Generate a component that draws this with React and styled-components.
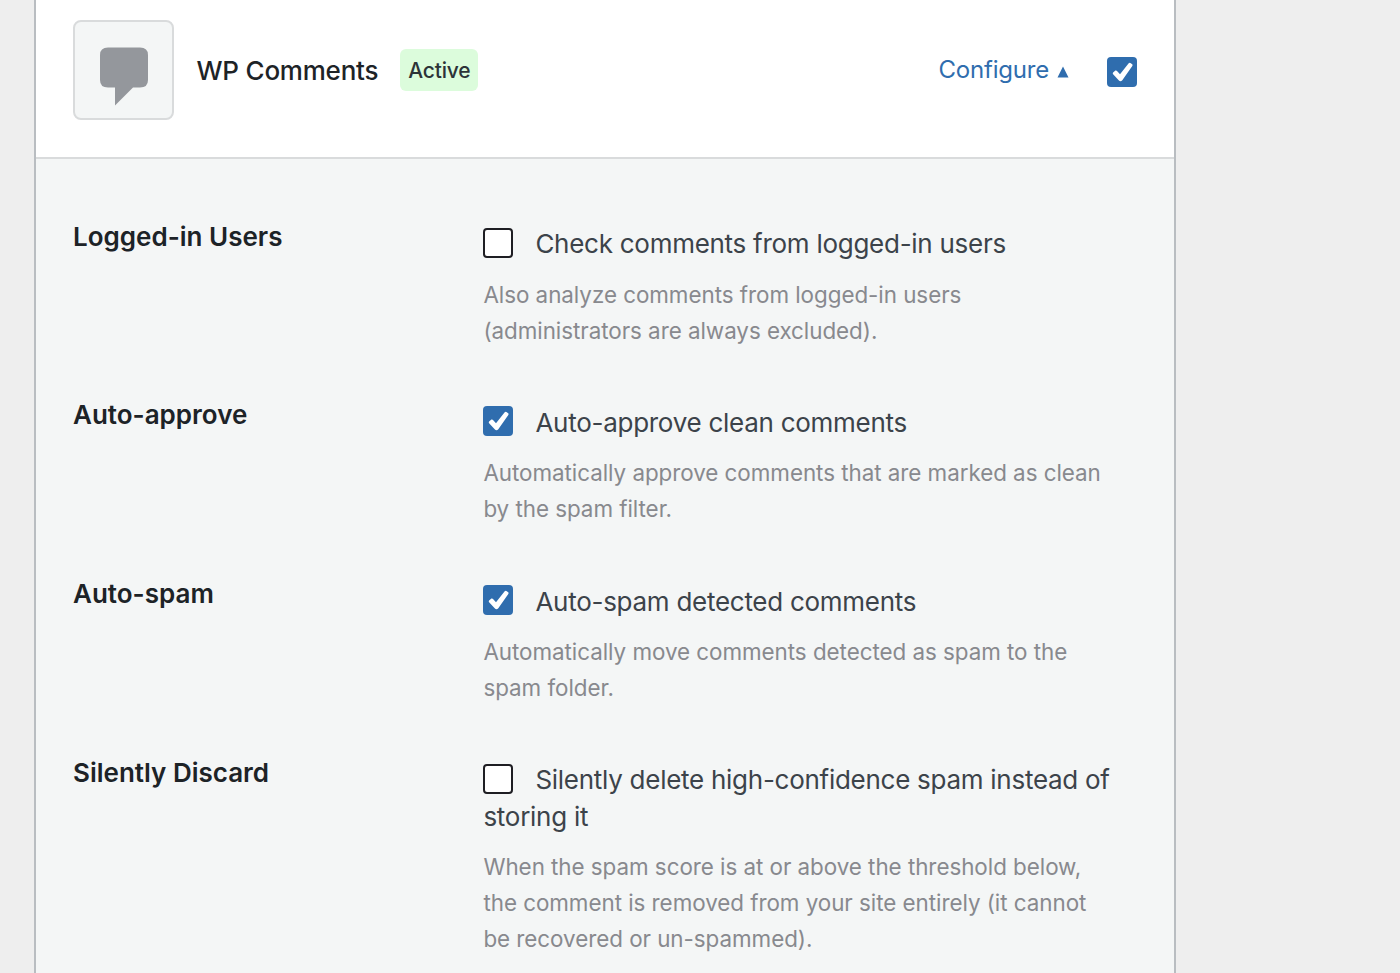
import React from 'react'
import styled, { createGlobalStyle } from 'styled-components'

const GlobalStyle = createGlobalStyle`
  * {
    box-sizing: border-box;
  }
  body {
    margin: 0;
    background-color: #eeeeee;
    font-family: Inter, 'Liberation Sans', sans-serif;
    color: #3c434a;
    overflow: hidden;
  }
`

const Page = styled.main`
  height: 973px;
  padding-left: 34px;
  overflow: hidden;
`

const Card = styled.section`
  display: flex;
  flex-direction: column;
  width: 1142px;
  height: 100%;
  border: 2px solid #b9bdc1;
  border-width: 0 2px;
  background-color: #f4f6f6;
`

const Header = styled.header`
  display: flex;
  flex-shrink: 0;
  align-items: center;
  height: 159px;
  padding: 0 37px 17px;
  border-bottom: 2px solid #d9dbdc;
  background-color: white;
`

const IconBox = styled.div`
  display: flex;
  justify-content: center;
  width: 101px;
  height: 100px;
  padding: 25px 0 0;
  border: 2px solid #d9dbdc;
  border-radius: 8px;
  background-color: #f4f6f6;
`

const Name = styled.h2`
  margin: 1px 22px 0 22.5px;
  font-size: 26px;
  font-weight: 500;
  line-height: 36px;
  letter-spacing: -0.22px;
  color: #1d2327;
`

const Badge = styled.span`
  padding: 1px 8px 0;
  border-radius: 6px;
  background-color: #dcfcdc;
  font-size: 21px;
  font-weight: 500;
  line-height: 41px;
  letter-spacing: -0.2px;
  color: #2c3338;
`

const Configure = styled.a`
  display: flex;
  align-items: center;
  gap: 8px;
  margin: 0 38px 1px auto;
  font-size: 24px;
  line-height: 36px;
  letter-spacing: -0.2px;
  color: #2f6dae;
  text-decoration: none;
  cursor: pointer;
  & svg {
    margin-top: 4px;
  }
`

const Box = styled.span`
  display: inline-flex;
  align-items: center;
  justify-content: center;
  width: 30px;
  height: 30px;
  border: ${({ $checked }) => $checked ? 'none' : '2px solid #1e1e23'};
  border-radius: 4px;
  background-color: ${({ $checked }) => $checked ? '#2f6dae' : 'white'};
  vertical-align: -4.4px;
`

const HeaderToggle = styled.div`
  display: flex;
  margin-top: 3px;
`

const Settings = styled.div`
  display: flex;
  flex-direction: column;
  gap: 55.7px;
  padding: 66.5px 37px 0;
`

const Row = styled.div`
  display: grid;
  grid-template-columns: 410.4px 640px;
`

const Title = styled.h3`
  margin: -7px 0 0;
  font-size: 26px;
  font-weight: 600;
  line-height: 36px;
  color: #1d2327;
`

const Label = styled.label`
  display: block;
  padding-top: 0.8px;
  font-size: 26px;
  line-height: 36.4px;
  letter-spacing: -0.27px;
  & ${Box} {
    margin-right: 22px;
  }
`

const Description = styled.p`
  margin: 14px 0 0;
  font-size: 22.4px;
  line-height: 35.9px;
  letter-spacing: -0.04px;
  color: #88898e;
`

const settings = [
  {
    title: 'Logged-in Users',
    checked: false,
    label: ['Check comments from logged-in users'],
    description: ['Also analyze comments from logged-in users', '(administrators are always excluded).']
  },
  {
    title: 'Auto-approve',
    checked: true,
    label: ['Auto-approve clean comments'],
    description: ['Automatically approve comments that are marked as clean', 'by the spam filter.']
  },
  {
    title: 'Auto-spam',
    checked: true,
    label: ['Auto-spam detected comments'],
    description: ['Automatically move comments detected as spam to the', 'spam folder.']
  },
  {
    title: 'Silently Discard',
    checked: false,
    label: ['Silently delete high-confidence spam instead of', 'storing it'],
    description: [
      'When the spam score is at or above the threshold below,',
      'the comment is removed from your site entirely (it cannot',
      'be recovered or un-spammed).'
    ]
  }
]

const Checkbox = ({ checked }) => (
  <Box $checked={checked} role='checkbox' aria-checked={checked}>
    {checked && (
      <svg width='30' height='30' viewBox='0 0 30 30' fill='white'>
        <path d='M6.1 15.6 8.4 13.6Q9.3 13.1 10 13.9L13 17.2 21.7 6.3Q22.5 5.4 23.4 6L25.2 7.3Q26 8 25.3 8.9L15.3 23.2Q13.5 25.2 11.7 23.2L6.1 17.3Q5.3 16.4 6.1 15.6Z' />
      </svg>
    )}
  </Box>
)

const Lines = ({ lines }) => lines.map((line, i) => (
  <React.Fragment key={line}>
    {i > 0 && <br />}
    {line}
  </React.Fragment>
))

const App = () => {
  return (
    <Page>
      <GlobalStyle />
      <Card>
        <Header>
          <IconBox>
            <svg width='48' height='59' viewBox='0 0 48 59' fill='#94979c'>
              <path d='M8 0.5H40Q48 0.5 48 8V33Q48 40.5 40 40.5H33L15 58.5V40.5H8Q0 40.5 0 33V8Q0 0.5 8 0.5Z' />
            </svg>
          </IconBox>
          <Name>WP Comments</Name>
          <Badge>Active</Badge>
          <Configure>
            Configure
            <svg width='12' height='12' viewBox='0 0 12 12' fill='#2f6dae'>
              <path d='M6 0.5 11.5 11.5H0.5Z' />
            </svg>
          </Configure>
          <HeaderToggle>
            <Checkbox checked />
          </HeaderToggle>
        </Header>
        <Settings>
          {settings.map(({ title, checked, label, description }) => (
            <Row key={title}>
              <Title>{title}</Title>
              <div>
                <Label>
                  <Checkbox checked={checked} />
                  <Lines lines={label} />
                </Label>
                <Description>
                  <Lines lines={description} />
                </Description>
              </div>
            </Row>
          ))}
        </Settings>
      </Card>
    </Page>
  )
}

export default App
